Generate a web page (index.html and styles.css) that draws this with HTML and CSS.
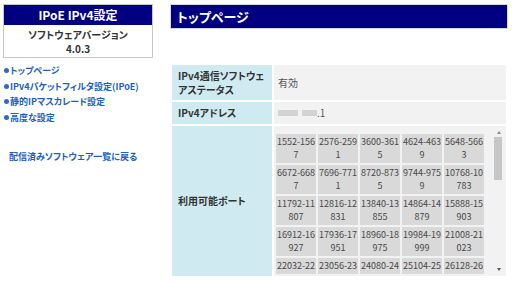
FILE: index.html
```html
<!DOCTYPE html>
<html lang="ja">
<head>
  <meta charset="utf-8">
  <link rel="stylesheet" href="styles.css">
</head>
<body>
<div class="page">
  <aside class="side">
    <div class="side-box">
      <div class="side-title">IPoE IPv4設定</div>
      <div class="side-ver">ソフトウェアバージョン<br>4.0.3</div>
    </div>
    <ul class="nav">
      <li><a href="#">トップページ</a></li>
      <li><a href="#">IPv4パケットフィルタ設定(IPoE)</a></li>
      <li><a href="#">静的IPマスカレード設定</a></li>
      <li><a href="#">高度な設定</a></li>
    </ul>
    <a class="back" href="#">配信済みソフトウェア一覧に戻る</a>
  </aside>

  <main class="main">
    <h1 class="title">トップページ</h1>
    <table class="info">
      <tr>
        <th>IPv4通信ソフトウェアステータス</th>
        <td>有効</td>
      </tr>
      <tr>
        <th>IPv4アドレス</th>
        <td><span class="mask mask-a"></span><span class="mask mask-b"></span>.1</td>
      </tr>
      <tr>
        <th>利用可能ポート</th>
        <td class="ports-cell">
          <div class="ports-box">
            <div class="ports">
              <div class="port">1552-1567</div>
              <div class="port">2576-2591</div>
              <div class="port">3600-3615</div>
              <div class="port">4624-4639</div>
              <div class="port">5648-5663</div>
              <div class="port">6672-6687</div>
              <div class="port">7696-7711</div>
              <div class="port">8720-8735</div>
              <div class="port">9744-9759</div>
              <div class="port">10768-10783</div>
              <div class="port">11792-11807</div>
              <div class="port">12816-12831</div>
              <div class="port">13840-13855</div>
              <div class="port">14864-14879</div>
              <div class="port">15888-15903</div>
              <div class="port">16912-16927</div>
              <div class="port">17936-17951</div>
              <div class="port">18960-18975</div>
              <div class="port">19984-19999</div>
              <div class="port">21008-21023</div>
              <div class="port">22032-22047</div>
              <div class="port">23056-23071</div>
              <div class="port">24080-24095</div>
              <div class="port">25104-25119</div>
              <div class="port">26128-26143</div>
              <div class="port">27152-27167</div>
              <div class="port">28176-28191</div>
              <div class="port">29200-29215</div>
              <div class="port">30224-30239</div>
              <div class="port">31248-31263</div>
              <div class="port">32272-32287</div>
              <div class="port">33296-33311</div>
              <div class="port">34320-34335</div>
              <div class="port">35344-35359</div>
              <div class="port">36368-36383</div>
              <div class="port">37392-37407</div>
              <div class="port">38416-38431</div>
              <div class="port">39440-39455</div>
              <div class="port">40464-40479</div>
              <div class="port">41488-41503</div>
              <div class="port">42512-42527</div>
              <div class="port">43536-43551</div>
              <div class="port">44560-44575</div>
              <div class="port">45584-45599</div>
              <div class="port">46608-46623</div>
              <div class="port">47632-47647</div>
              <div class="port">48656-48671</div>
              <div class="port">49680-49695</div>
              <div class="port">50704-50719</div>
              <div class="port">51728-51743</div>
              <div class="port">52752-52767</div>
              <div class="port">53776-53791</div>
              <div class="port">54800-54815</div>
              <div class="port">55824-55839</div>
              <div class="port">56848-56863</div>
              <div class="port">57872-57887</div>
              <div class="port">58896-58911</div>
              <div class="port">59920-59935</div>
              <div class="port">60944-60959</div>
              <div class="port">61968-61983</div>
              <div class="port">62992-63007</div>
              <div class="port">64016-64031</div>
              <div class="port">65040-65055</div>
            </div>
            <div class="scrollbar">
              <span class="sb-arrow sb-up"></span>
              <span class="sb-track"><span class="sb-thumb"></span></span>
              <span class="sb-arrow sb-down"></span>
            </div>
          </div>
        </td>
      </tr>
    </table>
  </main>
</div>
</body>
</html>
```

FILE: styles.css
```css
html {
  overflow: hidden;
}
body {
  margin: 0;
  font-family: "Noto Sans CJK JP", "Noto Sans", sans-serif;
  font-feature-settings: "palt";
  color: #333;
  background: #fff;
}
.page {
  display: flex;
  gap: 17px;
  padding: 4px 4px 0 3px;
}

/* サイドメニュー */
.side {
  width: 150px;
  flex: none;
}
.side-box {
  border: 1px solid #c8c8c8;
}
.side-title {
  height: 20px;
  line-height: 20px;
  background: #000080;
  color: #fff;
  font-size: 12px;
  font-weight: bold;
  text-align: center;
}
.side-ver {
  padding: 3px 0 1px;
  font-size: 10px;
  font-weight: bold;
  line-height: 14px;
  text-align: center;
}
.nav {
  list-style: none;
  margin: 5px 0 0;
  padding: 0 0 0 1px;
}
.nav li {
  line-height: 15.5px;
  font-size: 9px;
  white-space: nowrap;
}
.nav a,
.back {
  color: #2260bf;
  font-weight: bold;
  text-decoration: none;
}
.nav a::before {
  content: "";
  display: inline-block;
  width: 5px;
  height: 5px;
  margin-right: 1px;
  border-radius: 50%;
  background: #2a6cc4;
  vertical-align: 1px;
}
.back {
  display: block;
  margin: 24px 0 0 6px;
  font-size: 9px;
  line-height: 15.5px;
}

/* メイン */
.main {
  flex: 1;
  min-width: 0;
}
.title {
  margin: 0;
  height: 23px;
  line-height: 23px;
  padding: 0 6px;
  border: 1px solid #d8d8e0;
  background: #000080;
  color: #fff;
  font-size: 13px;
  font-weight: bold;
}
.info {
  width: 100%;
  margin-top: 34px;
  border-spacing: 2px;
  font-size: 10px;
  line-height: 13.5px;
}
.info th {
  box-sizing: border-box;
  width: 100px;
  padding: 4px 6px;
  background: #cfebf1;
  color: #333;
  text-align: left;
  vertical-align: middle;
}
.info td {
  padding: 4px;
  background: #f2f2f2;
  color: #555;
}
.mask {
  display: inline-block;
  height: 6px;
  background: #d3d3d3;
  filter: blur(0.7px);
  vertical-align: 1px;
}
.mask-a {
  width: 20px;
  margin-right: 4px;
}
.mask-b {
  width: 15px;
}
.info .ports-cell {
  padding: 2px;
}
.ports-box {
  display: flex;
  height: 146px;
}
.ports {
  flex: 1;
  padding-top: 6px;
  overflow: hidden;
  display: grid;
  grid-template-columns: repeat(5, 40px);
  grid-auto-rows: 29px;
  gap: 2px;
}
.port {
  background: #d9d9d9;
  color: #484848;
  font-size: 9px;
  line-height: 13px;
  padding-top: 1px;
  text-align: center;
  word-break: break-all;
}

/* スクロールバー */
.scrollbar {
  width: 10px;
  flex: none;
  display: flex;
  flex-direction: column;
}
.sb-arrow {
  height: 9px;
  display: flex;
  align-items: center;
  justify-content: center;
}
.sb-arrow::before {
  content: "";
  border-left: 2px solid transparent;
  border-right: 2px solid transparent;
}
.sb-up::before {
  border-bottom: 3px solid #888;
}
.sb-down::before {
  border-top: 3px solid #555;
}
.sb-track {
  flex: 1;
  padding-right: 2px;
}
.sb-thumb {
  display: block;
  height: 43px;
  background: #c6c6c6;
}
```
